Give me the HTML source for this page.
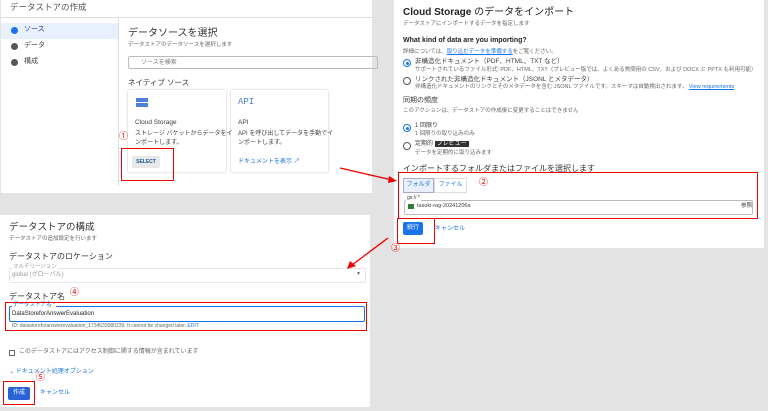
<!DOCTYPE html>
<html><head><meta charset="utf-8"><style>
*{margin:0;padding:0;box-sizing:border-box}
body{width:768px;height:411px;background:#e3e3e3;position:relative;overflow:hidden;font-family:"Liberation Sans","Noto Sans CJK JP",sans-serif;color:#3c4043}
.a{position:absolute;white-space:nowrap;line-height:1.15}
.p{position:absolute;background:#fff}
.s{font-size:6.5px;color:#666}
.rb{position:absolute;border:1.5px solid #e00}
.rad{position:absolute;width:8px;height:8px;border:1px solid #555;border-radius:50%}
.rad.on{border-color:#1a73e8}
.rad.on:after{content:"";position:absolute;left:1.5px;top:1.5px;width:3px;height:3px;border-radius:50%;background:#1a73e8}
.btn{position:absolute;background:#1a73e8;color:#fff;font-size:6px;text-align:center;border-radius:2px}
.red{color:#e00;font-size:9px}
.lnk{color:#1a73e8}
</style></head><body>
<!-- panel 1 -->
<div class="p" style="left:1px;top:0;width:371px;height:193px">
 <div class="a" style="left:9px;top:3px;font-size:8.5px;color:#555">データストアの作成</div>
 <div class="a" style="left:0;top:17px;width:371px;height:1px;background:#ddd"></div>
 <div class="a" style="left:0;top:23px;width:117px;height:16px;background:#e8f0fe"></div>
 <div class="a" style="left:117px;top:18px;width:1px;height:168px;background:#ddd"></div>
 <div class="a" style="left:10px;top:27px;width:7px;height:7px;border-radius:50%;background:#1a73e8"></div>
 <div class="a" style="left:10px;top:43px;width:7px;height:7px;border-radius:50%;background:#555"></div>
 <div class="a" style="left:10px;top:59px;width:7px;height:7px;border-radius:50%;background:#555"></div>
 <div class="a" style="left:23px;top:26px;font-size:7px;color:#1a3e8e">ソース</div>
 <div class="a" style="left:23px;top:42px;font-size:7px">データ</div>
 <div class="a" style="left:23px;top:58px;font-size:7px">構成</div>
 <div class="a" style="left:127px;top:28px;font-size:10px;color:#333">データソースを選択</div>
 <div class="a s" style="left:127px;top:42px;font-size:5.5px">データストアのデータソースを選択します</div>
 <div class="a" style="left:127px;top:56px;width:250px;height:13px;border:1px solid #bbb;border-radius:2px;font-size:6px;color:#777;padding:3px 0 0 12px">ソースを検索</div>
 <div class="a" style="left:127px;top:79px;font-size:7.5px;color:#333">ネイティブ ソース</div>
 <div class="a" style="left:127px;top:90px;width:98px;height:82px;box-shadow:0 0 2px #bbb;border-radius:2px"></div>
 <div class="a" style="left:230px;top:90px;width:97px;height:82px;box-shadow:0 0 2px #bbb;border-radius:2px"></div>
 <div class="a" style="left:135px;top:98px;width:12px;height:9px;background:#4e7fd9;border-top:2px solid #4e7fd9"></div>
 <div class="a" style="left:135px;top:102px;width:12px;height:1px;background:#fff"></div>
 <div class="a" style="left:237px;top:97px;font-size:9px;color:#4e7fd9;font-family:'Liberation Mono',monospace">API</div>
 <div class="a" style="left:134px;top:119px;font-size:6.5px">Cloud Storage</div>
 <div class="a" style="left:134px;top:130px;font-size:6px;line-height:9px">ストレージ バケットからデータをイ<br>ンポートします。</div>
 <div class="a" style="left:237px;top:119px;font-size:6.5px">API</div>
 <div class="a" style="left:237px;top:130px;font-size:6px;line-height:9px">API を呼び出してデータを手動でイ<br>ンポートします。</div>
 <div class="a lnk" style="left:237px;top:159px;font-size:6px">ドキュメントを表示 ↗</div>
 <div class="a" style="left:131px;top:156px;width:28px;height:12px;background:#e8e8e8;border-radius:2px;font-size:5px;color:#1a4f9e;font-weight:bold;text-align:center;line-height:12px">SELECT</div>
 <div class="a red" style="left:118px;top:131px">①</div>
 <div class="rb" style="left:120px;top:148px;width:53px;height:33px"></div>
</div>
<!-- panel 2 -->
<div class="p" style="left:394px;top:0;width:370px;height:248px">
 <div class="a" style="left:9px;top:7px;font-size:10px;color:#222"><b>Cloud Storage</b> のデータをインポート</div>
 <div class="a s" style="left:9px;top:21px;font-size:5.5px">データストアにインポートするデータを指定します</div>
 <div class="a" style="left:9px;top:37px;font-size:7px;font-weight:bold;color:#222">What kind of data are you importing?</div>
 <div class="a s" style="left:9px;top:49px;font-size:5.5px">詳細については、<span class="lnk" style="text-decoration:underline">取り込むデータを準備する</span>をご覧ください。</div>
 <div class="rad on" style="left:9px;top:59px"></div>
 <div class="a" style="left:21px;top:58px;font-size:6.5px">非構造化ドキュメント（PDF、HTML、TXT など）</div>
 <div class="a s" style="left:21px;top:67px;font-size:5.5px">サポートされているファイル形式: PDF、HTML、TXT（プレビュー版では、よくある質問用の CSV、および DOCX と PPTX も利用可能）</div>
 <div class="rad" style="left:9px;top:77px"></div>
 <div class="a" style="left:21px;top:76px;font-size:6.5px">リンクされた非構造化ドキュメント（JSONL とメタデータ）</div>
 <div class="a s" style="left:21px;top:84px;font-size:5.5px">非構造化ドキュメントのリンクとそのメタデータを含む JSONL ファイルです。スキーマは自動検出されます。 <span class="lnk" style="text-decoration:underline">View requirements</span></div>
 <div class="a" style="left:9px;top:97px;font-size:7px">同期の頻度</div>
 <div class="a s" style="left:9px;top:108px;font-size:5.5px">このアクションは、データストアの作成後に変更することはできません</div>
 <div class="rad on" style="left:9px;top:124px"></div>
 <div class="a" style="left:21px;top:123px;font-size:6px">1 回限り</div>
 <div class="a s" style="left:21px;top:131px;font-size:5.5px">1 回限りの取り込みのみ</div>
 <div class="rad" style="left:9px;top:142px"></div>
 <div class="a" style="left:21px;top:141px;font-size:6px">定期的 <span style="background:#333;color:#fff;padding:0 2px">プレビュー</span></div>
 <div class="a s" style="left:21px;top:150px;font-size:5.5px">データを定期的に取り込みます</div>
 <div class="a" style="left:9px;top:164px;font-size:8px;color:#333">インポートするフォルダまたはファイルを選択します</div>
 <div class="a" style="left:9px;top:178px;width:31px;height:15px;background:#e8f0fe;border:1px solid #aac;font-size:6px;color:#1a73e8;text-align:center;line-height:13px">フォルダ</div>
 <div class="a" style="left:40px;top:178px;width:33px;height:15px;border:1px solid #ddd;font-size:6px;color:#1a73e8;text-align:center;line-height:13px">ファイル</div>
 <div class="a red" style="left:85px;top:177px">②</div>
 <div class="a" style="left:10px;top:200px;width:349px;height:15px;border:1px solid #bbb;border-radius:2px"></div>
 <div class="a" style="left:12px;top:196px;font-size:5px;background:#fff;padding:0 1px">gs:// *</div>
 <div class="a" style="left:14px;top:204px;width:6px;height:5px;background:#2e7d32"></div>
 <div class="a" style="left:23px;top:203px;font-size:5.5px">tasuki-rag-20241206a</div>
 <div class="a" style="left:347px;top:203px;font-size:5.5px">参照</div>
 <div class="rb" style="left:4px;top:172px;width:360px;height:47px"></div>
 <div class="btn" style="left:9px;top:222px;width:20px;height:13px;line-height:13px">続行</div>
 <div class="a lnk" style="left:41px;top:226px;font-size:6px">キャンセル</div>
 <div class="rb" style="left:3px;top:218px;width:38px;height:26px"></div>
</div>
<div class="a red" style="left:391px;top:243px">③</div>
<!-- panel 3 -->
<div class="p" style="left:0;top:215px;width:370px;height:192px">
 <div class="a" style="left:9px;top:8px;font-size:9.5px;color:#333">データストアの構成</div>
 <div class="a s" style="left:9px;top:21px;font-size:5.5px">データストアの追加設定を行います</div>
 <div class="a" style="left:9px;top:37px;font-size:8px;color:#333">データストアのロケーション</div>
 <div class="a" style="left:9px;top:53px;width:357px;height:15px;border:1px solid #e5e5e5;border-radius:2px"></div>
 <div class="a" style="left:12px;top:49px;font-size:5.5px;color:#999;background:#fff;padding:0 1px">マルチリージョン</div>
 <div class="a" style="left:12px;top:57px;font-size:6px;color:#999">global (グローバル)</div>
 <div class="a" style="left:356px;top:57px;font-size:5px;color:#666">▼</div>
 <div class="a" style="left:9px;top:77px;font-size:8px;color:#333">データストア名</div>
 <div class="a red" style="left:70px;top:72px">④</div>
 <div class="a" style="left:9px;top:91px;width:356px;height:16px;border:1.5px solid #1a73e8;border-radius:2px"></div>
 <div class="a" style="left:12px;top:87px;font-size:5.5px;color:#1a73e8;background:#fff;padding:0 1px">データストア名 *</div>
 <div class="a" style="left:12px;top:96px;font-size:6px;color:#222">DataStoreforAnswerEvaluation</div>
 <div class="a s" style="left:12px;top:109px;font-size:5px">ID: datastoreforanswerevaluation_1734533080239. It cannot be changed later. <span class="lnk">EDIT</span></div>
 <div class="rb" style="left:5px;top:87px;width:362px;height:29px"></div>
 <div class="a" style="left:9px;top:135px;width:6px;height:6px;border:1px solid #666"></div>
 <div class="a s" style="left:19px;top:134px;font-size:6px">このデータストアにはアクセス制御に関する情報が含まれています</div>
 <div class="a lnk" style="left:9px;top:154px;font-size:6px">⌄ ドキュメント処理オプション</div>
 <div class="btn" style="left:8px;top:172px;width:22px;height:13px;line-height:13px;background:#2a63d4">作成</div>
 <div class="a lnk" style="left:40px;top:175px;font-size:6px">キャンセル</div>
 <div class="a red" style="left:36px;top:157px">⑤</div>
 <div class="rb" style="left:3px;top:166px;width:32px;height:24px"></div>
</div>
<!-- arrows -->
<svg class="a" style="left:0;top:0" width="768" height="411">
 <g stroke="#e00" stroke-width="1.3" fill="#e00">
  <line x1="340" y1="168" x2="392" y2="180"/>
  <polygon points="397,181 389,176 388,183" stroke="none"/>
  <line x1="388" y1="238" x2="352" y2="265"/>
  <polygon points="347,269 350,261 356,266" stroke="none"/>
 </g>
</svg>
</body></html>
